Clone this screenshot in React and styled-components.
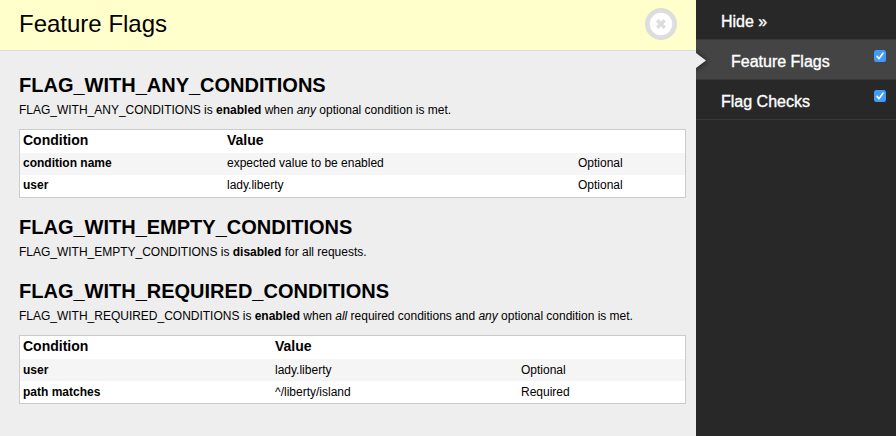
import React from 'react';
import styled, { createGlobalStyle } from 'styled-components';

const GlobalStyle = createGlobalStyle`
  * { box-sizing: border-box; }
  body {
    margin: 0;
    overflow: hidden;
    background: #eee;
    color: #000;
    font-family: "Liberation Sans", Arial, sans-serif;
  }
`;

const Page = styled.div`
  display: grid;
  grid-template-columns: 696px 200px;
  height: 436px;
`;

const Panel = styled.main`
  background: #eee;
`;

const PanelHeader = styled.header`
  display: flex;
  align-items: center;
  justify-content: space-between;
  height: 51px;
  padding: 0 19px 3px;
  background: #ffc;
  border-bottom: 1px solid #ddd;
`;

const PanelTitle = styled.h3`
  margin: 0;
  font-size: 24px;
  line-height: 28px;
  font-weight: 400;
`;

const CloseButton = styled.button`
  display: block;
  width: 32px;
  height: 32px;
  padding: 0;
  border: 0;
  background: none;
`;

const Content = styled.div`
  padding: 19px 10px 0 19px;
`;

const Section = styled.section`
  margin-bottom: 14px;
`;

const FlagName = styled.h4`
  margin: 0;
  height: 30px;
  line-height: 30px;
  font-size: 20px;
  font-weight: 700;
  white-space: nowrap;
`;

const Summary = styled.p`
  margin: 0;
  height: 20px;
  line-height: 20px;
  font-size: 12px;
  letter-spacing: -0.01px;
  white-space: nowrap;
`;

const Conditions = styled.div`
  margin-top: 9px;
  border: 1px solid #ccc;
  background: #fff;
`;

const Row = styled.div`
  display: grid;
  grid-template-columns: ${(p) => p.$columns};
  height: ${(p) => (p.$head ? 23 : 22)}px;
  line-height: ${(p) => (p.$head ? 20 : p.$leading || 20)}px;
  padding-left: 3px;
  font-size: ${(p) => (p.$head ? 14 : 12)}px;
  font-weight: ${(p) => (p.$head ? 700 : 400)};
  background: ${(p) => (p.$striped ? '#f5f5f5' : '#fff')};
`;

const Name = styled.span`
  font-weight: 700;
`;

const Sidebar = styled.nav`
  background: #282828;
`;

const NavItem = styled.div`
  position: relative;
  display: flex;
  justify-content: space-between;
  height: 40px;
  padding: 0 10px 0 ${(p) => (p.$active ? 35 : 25)}px;
  background: ${(p) => (p.$active ? '#444' : '#282828')};
  border-bottom: 1px solid #383838;
  color: #fff;
  font-size: 16px;
  line-height: 44px;
  -webkit-text-stroke: 0.35px #fff;
`;

const Pointer = styled.svg`
  position: absolute;
  left: 0;
  top: 6px;
`;

const Check = styled.svg`
  margin-top: 10px;
`;

function Checkbox() {
  return (
    <Check width="12" height="12" viewBox="0 0 12 12">
      <rect width="12" height="12" rx="2.5" fill="#419bf9" />
      <path d="M3 6.4 5.1 8.6 9 3.2" fill="none" stroke="#fff" strokeWidth="1.6" strokeLinecap="round" strokeLinejoin="round" />
    </Check>
  );
}

function ConditionTable({ columns, leading, rows }) {
  return (
    <Conditions>
      <Row $head $columns={columns}>
        <span>Condition</span>
        <span>Value</span>
      </Row>
      {rows.map(([name, value, kind], i) => (
        <Row key={name} $columns={columns} $leading={leading} $striped={i % 2 === 0}>
          <Name>{name}</Name>
          <span>{value}</span>
          <span>{kind}</span>
        </Row>
      ))}
    </Conditions>
  );
}

export default function App() {
  return (
    <Page>
      <GlobalStyle />
      <Panel>
        <PanelHeader>
          <PanelTitle>Feature Flags</PanelTitle>
          <CloseButton aria-label="Close">
            <svg width="32" height="32" viewBox="0 0 32 32">
              <circle cx="16" cy="16" r="13.6" fill="#fff" stroke="#ddd" strokeWidth="4.8" />
              <path d="M12.2 12.2 19.8 19.8M19.8 12.2 12.2 19.8" stroke="#ddd" strokeWidth="3.4" />
            </svg>
          </CloseButton>
        </PanelHeader>
        <Content>
          <Section>
            <FlagName>FLAG_WITH_ANY_CONDITIONS</FlagName>
            <Summary>
              FLAG_WITH_ANY_CONDITIONS is <b>enabled</b> when <i>any</i> optional condition is met.
            </Summary>
            <ConditionTable
              columns="204px 351px 1fr"
              leading={20}
              rows={[
                ['condition name', 'expected value to be enabled', 'Optional'],
                ['user', 'lady.liberty', 'Optional'],
              ]}
            />
          </Section>
          <Section>
            <FlagName>FLAG_WITH_EMPTY_CONDITIONS</FlagName>
            <Summary>
              FLAG_WITH_EMPTY_CONDITIONS is <b>disabled</b> for all requests.
            </Summary>
          </Section>
          <Section>
            <FlagName>FLAG_WITH_REQUIRED_CONDITIONS</FlagName>
            <Summary>
              FLAG_WITH_REQUIRED_CONDITIONS is <b>enabled</b> when <i>all</i> required conditions and <i>any</i> optional condition is met.
            </Summary>
            <ConditionTable
              columns="252px 246px 1fr"
              leading={22}
              rows={[
                ['user', 'lady.liberty', 'Optional'],
                ['path matches', '^/liberty/island', 'Required'],
              ]}
            />
          </Section>
        </Content>
      </Panel>
      <Sidebar>
        <NavItem>
          <span>Hide »</span>
        </NavItem>
        <NavItem $active>
          <Pointer width="20" height="30" viewBox="0 0 20 30">
            <defs>
              <filter id="pointer-shadow" x="-50%" y="-50%" width="220%" height="200%">
                <feGaussianBlur stdDeviation="2" />
              </filter>
            </defs>
            <path d="M0 6 11 15 0 24Z" fill="#222" filter="url(#pointer-shadow)" />
            <path d="M0 7 10 14.5 0 22Z" fill="#eee" />
          </Pointer>
          <span>Feature Flags</span>
          <Checkbox />
        </NavItem>
        <NavItem>
          <span>Flag Checks</span>
          <Checkbox />
        </NavItem>
      </Sidebar>
    </Page>
  );
}
